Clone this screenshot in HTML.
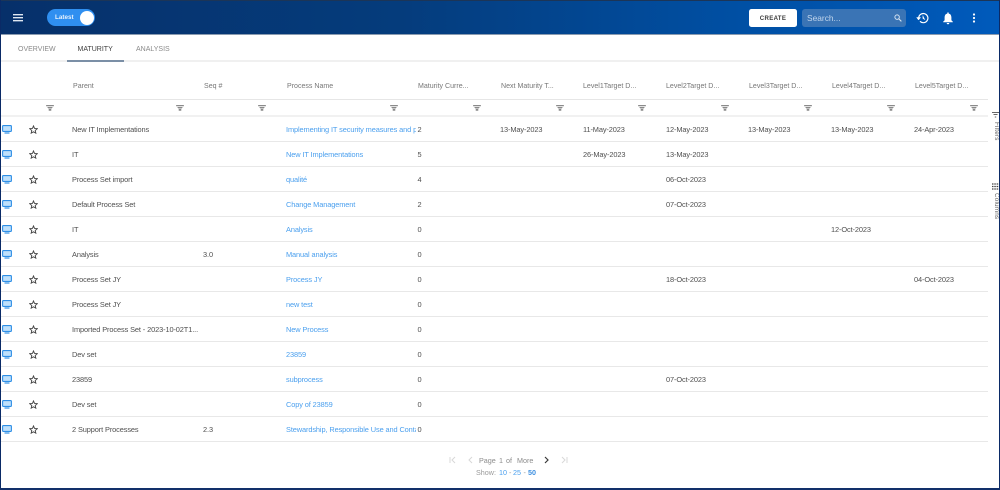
<!DOCTYPE html>
<html><head><meta charset="utf-8">
<style>
*{box-sizing:border-box}
html,body{margin:0;padding:0;width:1000px;height:490px;overflow:hidden;background:#fff;font-family:"Liberation Sans",sans-serif;color:#4a4a4a}
.abs,.t,.h,.f,.i,.r,.s{position:absolute}
#bar{left:0;top:0;width:1000px;height:35px;background:linear-gradient(90deg,#06306a 0%,#053c7c 40%,#0050a5 75%,#005abb 100%);border-top:1px solid #1c3557;border-bottom:1px solid #8a9bb0}
.tab{position:absolute;top:44.5px;font-size:7px;line-height:10px;color:#8a8a8a}
.h{top:81.5px;font-size:7.05px;line-height:10px;color:#777;white-space:nowrap}
.r{left:1px;width:987px;height:25px;border-bottom:1px solid #e8e8e8}
.t{top:8px;font-size:7.4px;letter-spacing:-.11px;line-height:10px;white-space:nowrap;color:#4f4f4f}
.l{color:#4a9fee;left:285px;width:130px;overflow:hidden}
.f{top:105px;width:8px;height:6px}
.i{left:1px;top:8px}
.s{left:28px;top:7.5px}
.p{position:absolute;font-size:7.2px;line-height:10px;white-space:pre;color:#8c8c8c}
</style></head><body>
<svg width="0" height="0" style="position:absolute"><defs>
<symbol id="fl" viewBox="0 0 9 7"><path d="M0 0h9v1.400H0zM1.300 2.400h6.400L6.700 3.900H2.300zM3 4.500h3V6.700H3z" fill="#8a8a8a"/></symbol>
<symbol id="mon" viewBox="0 0 10 9"><rect x=".6" y=".6" width="8.800" height="5.800" rx=".8" fill="#bfe0fb" stroke="#2f8fe6" stroke-width="1.100"/><path d="M2.500 8h5" stroke="#2f8fe6" stroke-width="1.200"/></symbol>
<symbol id="st" viewBox="0 0 10 10"><path d="M5 1l1.200 2.800 3 .3-2.300 2 .7 3L5 7.500 2.400 9.100l.7-3-2.300-2 3-.3z" fill="none" stroke="#444" stroke-width="1"/></symbol>
</defs></svg>

<div class="abs" id="bar"></div>
<svg class="abs" style="left:13px;top:14px" width="10" height="8"><path d="M0 .7h10M0 3.700h10M0 6.700h10" stroke="#dfe7f1" stroke-width="1.300"/></svg>
<div class="abs" style="left:47px;top:8.500px;width:48px;height:17.500px;border-radius:9px;background:#2f8ff0"></div>
<div class="abs" style="left:79.500px;top:10.500px;width:14px;height:14px;border-radius:50%;background:#fff"></div>
<div class="abs" style="left:55px;top:13px;font-size:6.300px;font-weight:bold;line-height:10px;color:#e6f1fd">Latest</div>
<div class="abs" style="left:749px;top:8.500px;width:48px;height:18px;border-radius:2.500px;background:#fff;color:#3c3c3c;font-size:6.100px;font-weight:bold;letter-spacing:.3px;text-align:center;line-height:20px">CREATE</div>
<div class="abs" style="left:802px;top:8.500px;width:104px;height:18px;border-radius:3px;background:#3a74b5"></div>
<div class="abs" style="left:807px;top:13px;font-size:8.400px;line-height:11px;color:#c2d6ec">Search...</div>
<svg class="abs" style="left:893.500px;top:13.500px" width="8" height="8" viewBox="0 0 9 9"><circle cx="3.500" cy="3.500" r="2.500" fill="none" stroke="#d7e4f2" stroke-width="1.100"/><path d="M5.500 5.500L8.300 8.300" stroke="#d7e4f2" stroke-width="1.300"/></svg>
<svg class="abs" style="left:916px;top:11.500px" width="13" height="12" viewBox="0 0 13 12"><path d="M2.700 6A4.600 4.600 0 1 1 4 9.300" fill="none" stroke="#fff" stroke-width="1.200"/><path d="M.6 5.500h4L2.600 8zM6.900 3.500v3l2.200 1.200" fill="#fff" stroke="#fff" stroke-width=".5"/></svg>
<svg class="abs" style="left:942px;top:11.500px" width="12" height="13" viewBox="0 0 12 13"><path d="M6 1.500c2.300 0 3.400 1.800 3.400 4v2.800l1.400 1.300v.6H1.200v-.6l1.400-1.300V5.500c0-2.200 1.100-4 3.400-4zM4.700 11h2.600c0 .8-.6 1.300-1.300 1.300S4.700 11.800 4.700 11zM5.300 .5h1.400v1.500H5.300z" fill="#fff"/></svg>
<svg class="abs" style="left:972px;top:13px" width="4" height="10"><circle cx="2" cy="1.500" r="1.100" fill="#fff"/><circle cx="2" cy="5" r="1.100" fill="#fff"/><circle cx="2" cy="8.500" r="1.100" fill="#fff"/></svg>

<div class="tab" style="left:18px">OVERVIEW</div>
<div class="tab" style="left:77.500px;color:#3f3f3f">MATURITY</div>
<div class="tab" style="left:136px">ANALYSIS</div>
<div class="abs" style="left:1px;top:60px;width:998px;height:2px;background:#f0f0f0"></div>
<div class="abs" style="left:67px;top:60px;width:57px;height:2px;background:#7b8fa6"></div>

<div class="h" style="left:73px">Parent</div>
<div class="h" style="left:204px">Seq #</div>
<div class="h" style="left:287px">Process Name</div>
<div class="h" style="left:418px">Maturity Curre...</div>
<div class="h" style="left:501px">Next Maturity T...</div>
<div class="h" style="left:583px">Level1Target D...</div>
<div class="h" style="left:666px">Level2Target D...</div>
<div class="h" style="left:749px">Level3Target D...</div>
<div class="h" style="left:832px">Level4Target D...</div>
<div class="h" style="left:915px">Level5Target D...</div>

<div class="abs" style="left:1px;top:99px;width:987px;height:1px;background:#e6e6e6"></div>
<div class="abs" style="left:1px;top:115px;width:987px;height:2px;background:#f1f1f1"></div>
<svg class="f" style="left:46px"><use href="#fl"/></svg>
<svg class="f" style="left:175.500px"><use href="#fl"/></svg>
<svg class="f" style="left:258px"><use href="#fl"/></svg>
<svg class="f" style="left:389.500px"><use href="#fl"/></svg>
<svg class="f" style="left:472.500px"><use href="#fl"/></svg>
<svg class="f" style="left:555.500px"><use href="#fl"/></svg>
<svg class="f" style="left:638px"><use href="#fl"/></svg>
<svg class="f" style="left:721px"><use href="#fl"/></svg>
<svg class="f" style="left:803.500px"><use href="#fl"/></svg>
<svg class="f" style="left:886.500px"><use href="#fl"/></svg>
<svg class="f" style="left:969.500px"><use href="#fl"/></svg>

<div class="r" style="top:117px"><svg class="i" width="10" height="9"><use href="#mon"/></svg><svg class="s" width="9" height="9"><use href="#st"/></svg><div class="t" style="left:71px">New IT Implementations</div><div class="t l">Implementing IT security measures and processes</div><div class="t" style="left:416.500px">2</div><div class="t" style="left:499px">13-May-2023</div><div class="t" style="left:582px">11-May-2023</div><div class="t" style="left:665px">12-May-2023</div><div class="t" style="left:747px">13-May-2023</div><div class="t" style="left:830px">13-May-2023</div><div class="t" style="left:913px">24-Apr-2023</div></div>
<div class="r" style="top:142px"><svg class="i" width="10" height="9"><use href="#mon"/></svg><svg class="s" width="9" height="9"><use href="#st"/></svg><div class="t" style="left:71px">IT</div><div class="t l">New IT Implementations</div><div class="t" style="left:416.500px">5</div><div class="t" style="left:582px">26-May-2023</div><div class="t" style="left:665px">13-May-2023</div></div>
<div class="r" style="top:167px"><svg class="i" width="10" height="9"><use href="#mon"/></svg><svg class="s" width="9" height="9"><use href="#st"/></svg><div class="t" style="left:71px">Process Set import</div><div class="t l">qualité</div><div class="t" style="left:416.500px">4</div><div class="t" style="left:665px">06-Oct-2023</div></div>
<div class="r" style="top:192px"><svg class="i" width="10" height="9"><use href="#mon"/></svg><svg class="s" width="9" height="9"><use href="#st"/></svg><div class="t" style="left:71px">Default Process Set</div><div class="t l">Change Management</div><div class="t" style="left:416.500px">2</div><div class="t" style="left:665px">07-Oct-2023</div></div>
<div class="r" style="top:217px"><svg class="i" width="10" height="9"><use href="#mon"/></svg><svg class="s" width="9" height="9"><use href="#st"/></svg><div class="t" style="left:71px">IT</div><div class="t l">Analysis</div><div class="t" style="left:416.500px">0</div><div class="t" style="left:830px">12-Oct-2023</div></div>
<div class="r" style="top:242px"><svg class="i" width="10" height="9"><use href="#mon"/></svg><svg class="s" width="9" height="9"><use href="#st"/></svg><div class="t" style="left:71px">Analysis</div><div class="t" style="left:202px">3.0</div><div class="t l">Manual analysis</div><div class="t" style="left:416.500px">0</div></div>
<div class="r" style="top:267px"><svg class="i" width="10" height="9"><use href="#mon"/></svg><svg class="s" width="9" height="9"><use href="#st"/></svg><div class="t" style="left:71px">Process Set JY</div><div class="t l">Process JY</div><div class="t" style="left:416.500px">0</div><div class="t" style="left:665px">18-Oct-2023</div><div class="t" style="left:913px">04-Oct-2023</div></div>
<div class="r" style="top:292px"><svg class="i" width="10" height="9"><use href="#mon"/></svg><svg class="s" width="9" height="9"><use href="#st"/></svg><div class="t" style="left:71px">Process Set JY</div><div class="t l">new test</div><div class="t" style="left:416.500px">0</div></div>
<div class="r" style="top:317px"><svg class="i" width="10" height="9"><use href="#mon"/></svg><svg class="s" width="9" height="9"><use href="#st"/></svg><div class="t" style="left:71px">Imported Process Set - 2023-10-02T1...</div><div class="t l">New Process</div><div class="t" style="left:416.500px">0</div></div>
<div class="r" style="top:342px"><svg class="i" width="10" height="9"><use href="#mon"/></svg><svg class="s" width="9" height="9"><use href="#st"/></svg><div class="t" style="left:71px">Dev set</div><div class="t l">23859</div><div class="t" style="left:416.500px">0</div></div>
<div class="r" style="top:367px"><svg class="i" width="10" height="9"><use href="#mon"/></svg><svg class="s" width="9" height="9"><use href="#st"/></svg><div class="t" style="left:71px">23859</div><div class="t l">subprocess</div><div class="t" style="left:416.500px">0</div><div class="t" style="left:665px">07-Oct-2023</div></div>
<div class="r" style="top:392px"><svg class="i" width="10" height="9"><use href="#mon"/></svg><svg class="s" width="9" height="9"><use href="#st"/></svg><div class="t" style="left:71px">Dev set</div><div class="t l">Copy of 23859</div><div class="t" style="left:416.500px">0</div></div>
<div class="r" style="top:417px"><svg class="i" width="10" height="9"><use href="#mon"/></svg><svg class="s" width="9" height="9"><use href="#st"/></svg><div class="t" style="left:71px">2 Support Processes</div><div class="t" style="left:202px">2.3</div><div class="t l">Stewardship, Responsible Use and Contact</div><div class="t" style="left:416.500px">0</div></div>

<svg class="abs" style="left:449px;top:456px" width="120" height="8" viewBox="0 0 120 8" fill="none"><path d="M1 1v6M6 1L3 4l3 3" stroke="#d8d8d8"/><path d="M23 1l-3 3 3 3" stroke="#d8d8d8"/><path d="M96 1l3 3-3 3" stroke="#3a3a3a" stroke-width="1.200"/><path d="M113 1l3 3-3 3M118 1v6" stroke="#d8d8d8"/></svg>
<div class="p" style="left:479px;top:456px">Page</div>
<div class="p" style="left:499px;top:456px">1</div>
<div class="p" style="left:506px;top:456px">of</div>
<div class="p" style="left:517px;top:456px">More</div>
<div class="p" style="left:476px;top:467.500px;color:#9a9a9a">Show:</div>
<div class="p" style="left:499px;top:467.500px;color:#4a9fee">10</div>
<div class="p" style="left:509px;top:467.500px;color:#9a9a9a">-</div>
<div class="p" style="left:513px;top:467.500px;color:#4a9fee">25</div>
<div class="p" style="left:523.500px;top:467.500px;color:#9a9a9a">-</div>
<div class="p" style="left:528px;top:467.500px;color:#3d8fe0;font-weight:bold">50</div>

<svg class="abs" style="left:992px;top:112px" width="7" height="7" viewBox="0 0 7 7"><path d="M0 .5h7M1.500 2.500h4M2.800 5h1.400" stroke="#666" stroke-width="1.100"/></svg>
<div class="abs" style="left:991px;top:122px;width:10px;font-size:6.300px;letter-spacing:.2px;line-height:9px;color:#666;writing-mode:vertical-rl">Filters</div>
<svg class="abs" style="left:992px;top:183px" width="7" height="7"><path d="M0 1h7M0 3.500h7M0 6h7" stroke="#444" stroke-width="1.300" stroke-dasharray="1.500 .8"/></svg>
<div class="abs" style="left:991px;top:193px;width:10px;font-size:6.300px;letter-spacing:.2px;line-height:9px;color:#666;writing-mode:vertical-rl">Columns</div>

<div class="abs" style="left:0;top:0;width:1px;height:490px;background:#0a2a66"></div>
<div class="abs" style="right:0;top:0;width:1px;height:490px;background:#0a2a66"></div>
<div class="abs" style="left:0;top:488px;width:1000px;height:2px;background:#12306a"></div>
</body></html>
